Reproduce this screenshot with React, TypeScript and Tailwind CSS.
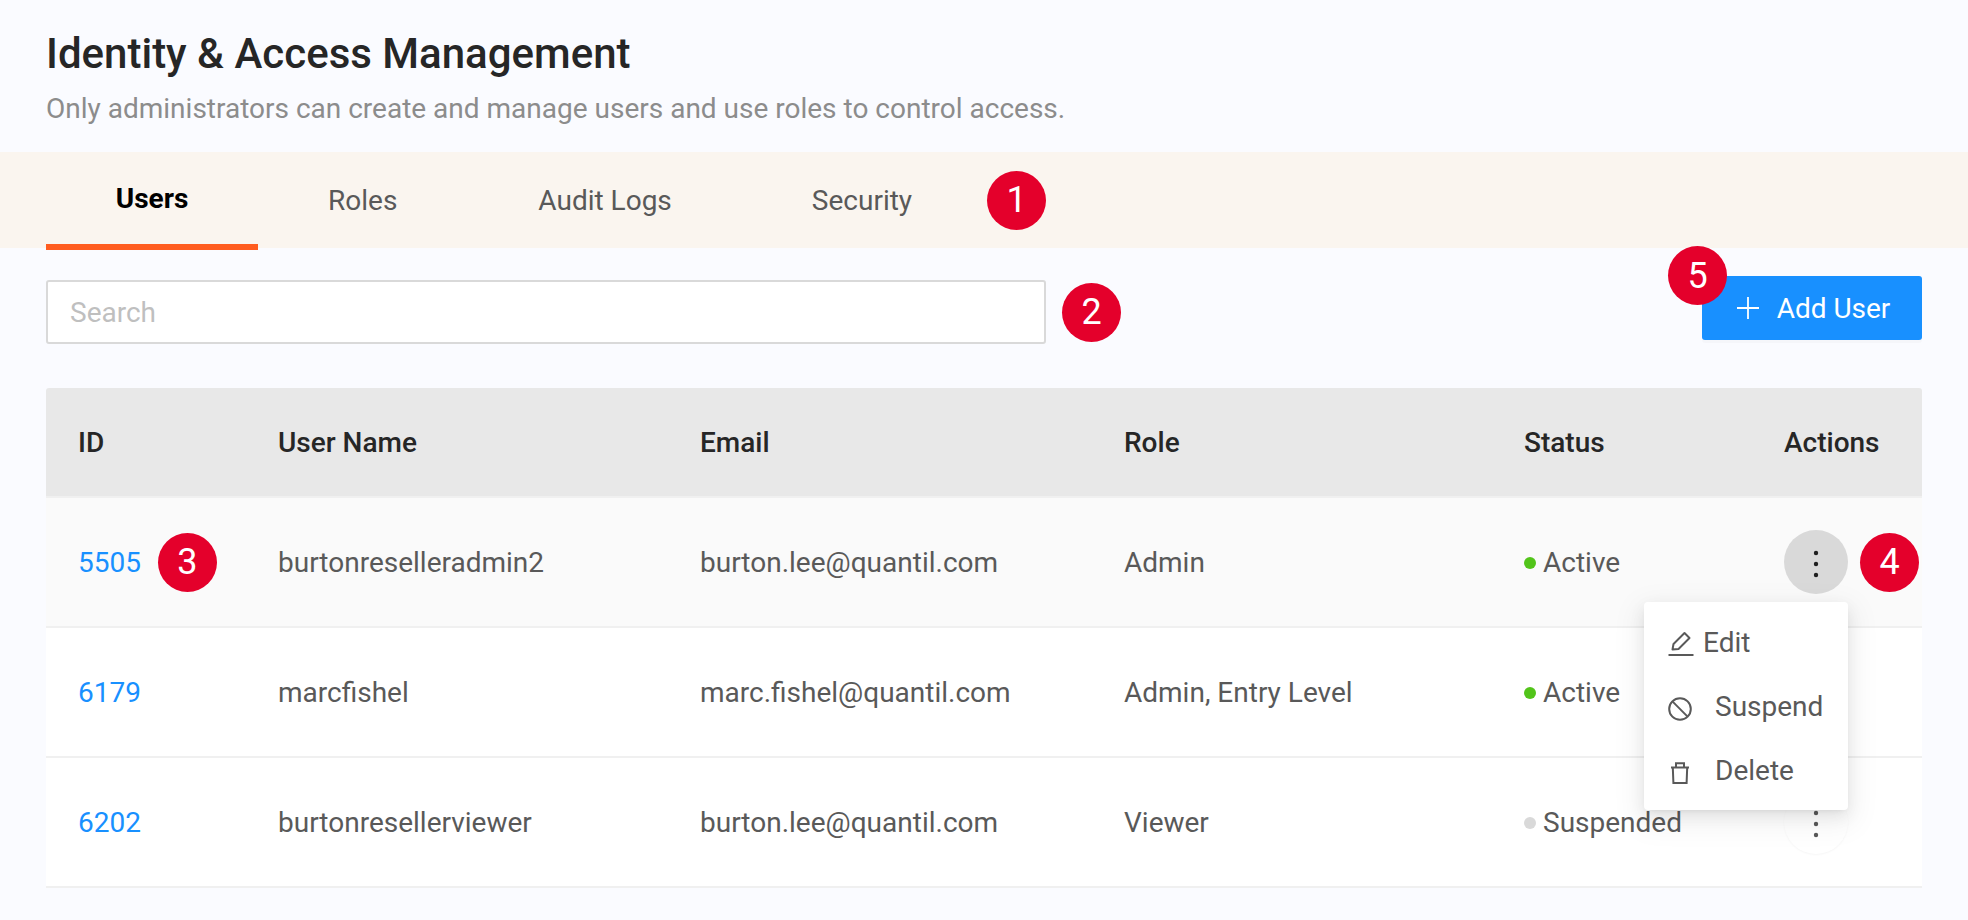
import React from 'react';

const gridCols = 'grid grid-cols-[200px_422px_424px_400px_260px_1fr] pl-8 items-center';

const users = [
  { id: '5505', name: 'burtonreselleradmin2', email: 'burton.lee@quantil.com', role: 'Admin', status: 'Active' },
  { id: '6179', name: 'marcfishel', email: 'marc.fishel@quantil.com', role: 'Admin, Entry Level', status: 'Active' },
  { id: '6202', name: 'burtonresellerviewer', email: 'burton.lee@quantil.com', role: 'Viewer', status: 'Suspended' },
];

const Badge = ({ n, className = '' }: { n: number; className?: string }) => (
  <span className={`flex h-[59px] w-[59px] shrink-0 items-center justify-center rounded-full bg-[#e4002b] text-[36px] leading-none text-white ${className}`}>
    {n}
  </span>
);

const Dots = ({ color }: { color: string }) => (
  <svg width="6" height="28" viewBox="0 0 6 28" fill={color}>
    <circle cx="3" cy="3" r="2.2" />
    <circle cx="3" cy="14" r="2.2" />
    <circle cx="3" cy="25" r="2.2" />
  </svg>
);

const EditIcon = () => (
  <svg width="26" height="26" viewBox="0 0 26 26" fill="none" stroke="#595959" strokeWidth="2">
    <path d="M4.5 19.5 L5.5 14 L16.5 3 L21.5 8 L10.5 19 Z" strokeLinejoin="round" />
    <path d="M0.5 25 H25.5" />
  </svg>
);

const BanIcon = () => (
  <svg className="mt-[3px]" width="24" height="24" viewBox="0 0 24 24" fill="none" stroke="#595959" strokeWidth="2">
    <circle cx="12" cy="12" r="10.8" />
    <path d="M4.4 4.4 L19.6 19.6" />
  </svg>
);

const TrashIcon = () => (
  <svg className="mt-[3px]" width="20" height="22" viewBox="0 0 20 22" fill="none" stroke="#595959" strokeWidth="2">
    <path d="M1 5.5 H19" />
    <path d="M6 5 V1.2 H14 V5" />
    <path d="M2.8 5.5 L3.4 21 H16.6 L17.2 5.5" />
  </svg>
);

export default function App() {
  return (
    <div className="min-h-[920px] bg-[#fafbff] font-['Roboto',sans-serif] text-[28px] text-[#595959]">
      {/* Header */}
      <div className="px-[46px] pt-[29px]">
        <h1 className="text-[42px] font-medium leading-[50px] text-[#262626]">Identity &amp; Access Management</h1>
        <p className="mt-[14px] text-[28px] leading-[32px] text-[#8c8c8c]">
          Only administrators can create and manage users and use roles to control access.
        </p>
      </div>

      {/* Tabs */}
      <div className="mt-[27px] flex h-[96px] items-center bg-[#faf5ef] pl-[46px]">
        <div className="relative flex h-full w-[212px] items-center justify-center pb-[2px] font-bold text-black">
          Users
          <span className="absolute bottom-[-2px] left-0 h-[6px] w-full bg-[#ff5c1f]" />
        </div>
        <div className="pl-[70px] pr-[71px] pt-[2px]">Roles</div>
        <div className="px-[70px] pt-[2px]">Audit Logs</div>
        <div className="px-[70px] pt-[2px]">Security</div>
        <Badge n={1} className="ml-[5px]" />
      </div>

      {/* Toolbar */}
      <div className="flex h-[140px] items-start justify-between px-[46px] pt-[28px]">
        <div className="mt-[4px] flex items-center gap-4">
          <input
            placeholder="Search"
            className="h-[64px] w-[1000px] rounded-[3px] border-2 border-[#d9d9d9] bg-white px-[22px] text-[28px] outline-none placeholder:text-[#bfbfbf]"
          />
          <Badge n={2} />
        </div>
        <button className="relative flex h-[64px] w-[220px] items-center justify-center gap-[18px] rounded-[3px] bg-[#1890ff] pl-[3px] text-white shadow-[0_3px_0_rgba(0,0,0,0.02)]">
          <svg width="22" height="22" viewBox="0 0 22 22" stroke="white" strokeWidth="1.8">
            <path d="M0 11 H22 M11 0 V22" />
          </svg>
          <span className="pt-[2px]">Add User</span>
          <Badge n={5} className="absolute left-[-34px] top-[-30px]" />
        </button>
      </div>

      {/* Table */}
      <div className="mx-[46px]">
        <div className={`${gridCols} h-[110px] rounded-t-[3px] border-b-2 border-[#f0f0f0] bg-[#e8e8e8] font-medium text-[#262626]`}>
          <div className="pt-[2px]">ID</div>
          <div className="pt-[2px]">User Name</div>
          <div className="pt-[2px]">Email</div>
          <div className="pt-[2px]">Role</div>
          <div className="pt-[2px]">Status</div>
          <div className="pt-[2px]">Actions</div>
        </div>
        {users.map((u, i) => (
          <div key={u.id} className={`${gridCols} h-[130px] border-b-2 border-[#f0f0f0] ${i === 0 ? 'bg-[#fafafa]' : 'bg-white'}`}>
            <div className="flex items-center gap-[17px] text-[#1890ff]">
              <span className="pt-[2px]">{u.id}</span>
              {i === 0 && <Badge n={3} />}
            </div>
            <div className="pt-[2px]">{u.name}</div>
            <div className="pt-[2px]">{u.email}</div>
            <div className="pt-[2px]">{u.role}</div>
            <div className="flex items-center gap-[7px] pt-[2px]">
              <span className={`h-3 w-3 rounded-full ${u.status === 'Active' ? 'bg-[#52c41a]' : 'bg-[#d9d9d9]'}`} />
              {u.status}
            </div>
            <div className="relative flex items-center gap-3">
              {i === 0 && (
                <span className="flex h-[64px] w-[64px] items-center justify-center rounded-full bg-[#d9d9d9] pt-[3px]">
                  <Dots color="#1f1f1f" />
                </span>
              )}
              {i === 0 && <Badge n={4} />}
              {i === 0 && (
                <div className="absolute left-[-140px] top-[72px] z-10 flex h-[208px] w-[204px] flex-col rounded-[4px] bg-white pl-6 pt-[9px] text-[28px] shadow-[0_9px_28px_8px_rgba(0,0,0,0.05),0_6px_16px_0_rgba(0,0,0,0.08),0_3px_6px_-4px_rgba(0,0,0,0.12)]">
                  <div className="flex h-[64px] items-center gap-[9px]"><EditIcon />Edit</div>
                  <div className="flex h-[64px] items-center gap-[23px]"><BanIcon />Suspend</div>
                  <div className="flex h-[64px] items-center gap-[25px] pl-[2px]"><TrashIcon />Delete</div>
                </div>
              )}
              {i === 2 && (
                <span className="flex h-[64px] w-[64px] items-center justify-center rounded-full bg-white pt-[3px] shadow-[0_1px_2px_rgba(0,0,0,0.04)]">
                  <Dots color="#595959" />
                </span>
              )}
            </div>
          </div>
        ))}
      </div>
    </div>
  );
}
